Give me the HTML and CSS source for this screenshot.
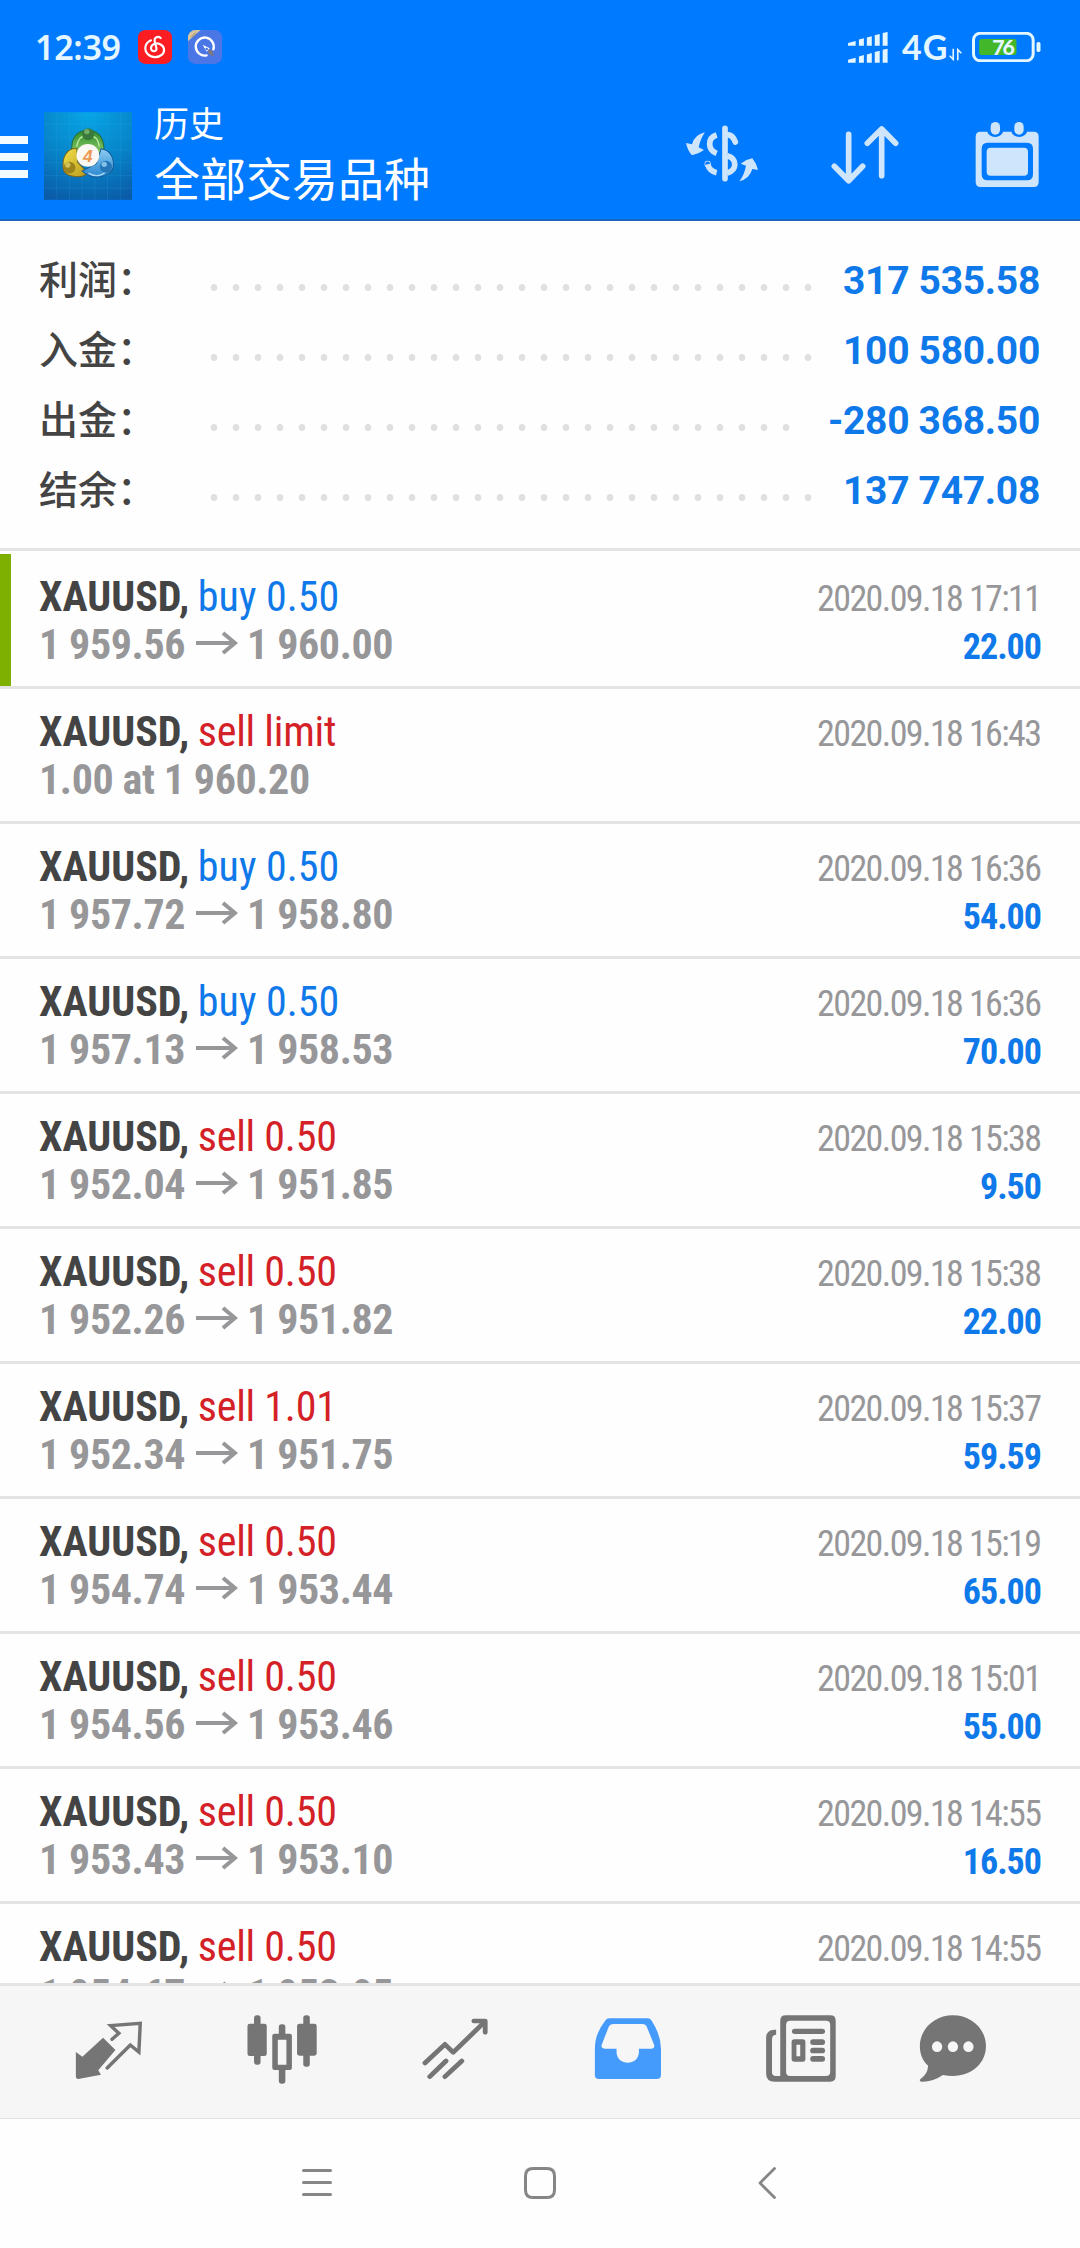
FILE: index.html
```html
<!DOCTYPE html>
<html lang="zh-CN">
<head>
<meta charset="utf-8">
<title>历史</title>
<link rel="stylesheet" href="styles.css">
</head>
<body>
<div class="screen">
  <header class="header">
    <div class="status">
      <span class="clock">12:39</span>
      <svg class="badge badge-music" viewBox="0 0 102 102"><rect width="102" height="102" rx="22" fill="#fb1d22"/><path d="M68 24C60 17 48 22 50 34L55 53C59 66 40 68 39 55C39 43 54 37 65 42C80 48 82 64 72 74C61 84 40 84 29 72C16 57 22 38 39 31" fill="none" stroke="#fff" stroke-width="6.5" stroke-linecap="round"/></svg>
      <svg class="badge" viewBox="0 0 102 102"><rect width="102" height="102" rx="22" fill="#4a76e6"/><path d="M0 34V22A22 22 0 0 1 22 0H38Z" fill="#d6c49d"/><path d="M10 22L22 8M15 23L26 10" stroke="#8c7a63" stroke-width="2"/><path d="M56 76A27 27 0 1 1 76 58" fill="none" stroke="#fff" stroke-width="7" stroke-linecap="round"/><path d="M44 44L65 55L56 65Z" fill="#fff"/><circle cx="56" cy="57" r="4" fill="#4a76e6"/><path d="M61 59C69 57 75 62 75 70L79 79L68 75C61 73 58 66 61 59Z" fill="#7c7785"/></svg>
      <span class="status-gap"></span>
      <svg class="signal" viewBox="627 96 121 94" fill="#e4f6ff"><path d="M627 129L650 123V138H627ZM660 119L675 115V138H660ZM684 113L699 109V138H684ZM708 106L723 102V138H708ZM732 99L747 96V138H732Z"/><path d="M627 180L650 174V189H627ZM660 170L675 166V189H660ZM684 164L699 160V189H684ZM708 157L723 153V189H708ZM732 150L747 147V189H732Z"/></svg>
      <span class="network">4G</span>
      <svg class="data" viewBox="930 143 40 38" fill="none" stroke="#e4f6ff" stroke-width="5"><path d="M943 144V177L932 166M957 180V147L968 158"/></svg>
      <svg class="battery" viewBox="998 96 206 90"><rect x="1002" y="100" width="179" height="82" rx="20" fill="none" stroke="#e4f6ff" stroke-width="9"/><rect x="1019" y="117" width="112" height="48" rx="7" fill="#43b72a"/><rect x="1191" y="126" width="12" height="30" rx="5" fill="#e4f6ff"/><text class="battery-text" x="1089" y="164" text-anchor="middle">76</text></svg>
    </div>
    <div class="toolbar">
      <div class="burger"><i></i><i></i><i></i></div>
      <svg class="logo" viewBox="133 335 263 262">
        <defs>
          <radialGradient id="sky" cx=".5" cy="0" r="1.05"><stop offset="0" stop-color="#07a6e6"/><stop offset=".55" stop-color="#0784c9"/><stop offset="1" stop-color="#0a5ca8"/></radialGradient>
          <linearGradient id="green" x1="0" y1="0" x2="0" y2="1"><stop offset="0" stop-color="#2f8c2c"/><stop offset="1" stop-color="#8fce6c"/></linearGradient>
          <linearGradient id="gold" x1="0" y1="0" x2="1" y2="1"><stop offset="0" stop-color="#f2e04a"/><stop offset="1" stop-color="#b99a1c"/></linearGradient>
          <linearGradient id="blue" x1="0" y1="0" x2="0" y2="1"><stop offset="0" stop-color="#8ccdf2"/><stop offset="1" stop-color="#2a86cf"/></linearGradient>
        </defs>
        <rect x="133" y="335" width="263" height="262" fill="url(#sky)"/>
        <path d="M171 335V597M209 335V597M247 335V597M285 335V597M323 335V597M361 335V597M133 372H396M133 410H396M133 448H396M133 486H396M133 524H396M133 562H396" stroke="#35b5e6" stroke-opacity=".25" stroke-width="2"/>
        <path d="M217 452C212 415 230 390 264 388C298 390 314 415 312 452L294 464L234 462Z" fill="url(#green)" stroke="#286b35" stroke-width="3"/>
        <path d="M231 438C234 415 243 404 264 404C286 404 296 415 298 438" fill="none" stroke="#b9e59d" stroke-width="4"/>
        <path d="M231 444C202 442 185 470 191 506C195 528 244 536 264 517L234 485Z" fill="url(#gold)" stroke="#77631a" stroke-width="3"/>
        <path d="M304 444C329 447 344 471 340 500C335 524 284 545 247 511L289 489Z" fill="url(#blue)" stroke="#165a96" stroke-width="3"/>
        <path d="M266 517C289 532 317 523 320 503" fill="none" stroke="#a9daf5" stroke-width="4"/>
        <circle cx="265" cy="401" r="18" fill="#39793b"/><circle cx="261" cy="393" r="8" fill="#71ae68"/>
        <circle cx="209" cy="501" r="18" fill="#9b831d"/><circle cx="204" cy="493" r="8" fill="#d2c156"/>
        <circle cx="318" cy="498" r="18" fill="#2476b7"/><circle cx="313" cy="491" r="8" fill="#82bfe8"/>
        <circle cx="264" cy="464" r="34" fill="#fbf8f3"/>
        <text class="logo-number" x="264" y="483" text-anchor="middle">4</text>
      </svg>
      <div class="titles"><div class="caption">历史</div><div class="title">全部交易品种</div></div>
      <svg class="tool" viewBox="138 362 217 201"><g fill="none" stroke="#cfe5fb" stroke-width="17"><path d="M255 384V535" stroke-linecap="round"/><path d="M230 404C202 413 202 448 230 459"/><path d="M262 403C276 404 282 413 286 425" stroke-linecap="round"/><path d="M262 466C292 475 292 509 262 518"/><path d="M203 492C207 507 216 514 230 517"/><circle cx="203" cy="491" r="1"/></g><path d="M195 396Q163 403 156 432L138 428Q142 449 156 465Q174 462 192 449L176 441Q181 416 195 396ZM298 543Q329 535 337 506L354 509Q350 490 337 474Q319 477 302 490L318 496Q313 524 298 543Z" fill="#cfe5fb"/></svg>
      <svg class="tool" viewBox="567 362 217 201" fill="none" stroke="#cfe5fb" stroke-width="17" stroke-linecap="round" stroke-linejoin="round"><path d="M626 402V540M583 498L626 541L668 498M725 526V386M682 429L725 386L767 429"/></svg>
      <svg class="tool" viewBox="995 362 217 201" fill="#cfe5fb"><path fill-rule="evenodd" d="M1024 394H1044C1049 414 1086 414 1091 394H1116C1121 414 1158 414 1163 394H1183Q1198 394 1198 409V545Q1198 560 1183 560H1024Q1009 560 1009 545V409Q1009 394 1024 394ZM1045 427Q1027 427 1027 445V522Q1027 540 1045 540H1163Q1181 540 1181 522V445Q1181 427 1163 427Z"/><rect x="1042" y="442" width="124" height="84" rx="12"/><rect x="1049" y="359" width="38" height="50" rx="19" fill="#007aff"/><rect x="1120" y="359" width="38" height="50" rx="19" fill="#007aff"/><rect x="1054" y="365" width="28" height="38" rx="14"/><rect x="1125" y="365" width="28" height="38" rx="14"/></svg>
    </div>
  </header>

  <main class="content">
    <section class="summary">
      <div class="sum-row"><span class="sum-label">利润：</span><span class="dots"></span><span class="sum-value">317 535.58</span></div>
      <div class="sum-row"><span class="sum-label">入金：</span><span class="dots"></span><span class="sum-value">100 580.00</span></div>
      <div class="sum-row"><span class="sum-label">出金：</span><span class="dots dots-short"></span><span class="sum-value">-280 368.50</span></div>
      <div class="sum-row"><span class="sum-label">结余：</span><span class="dots"></span><span class="sum-value">137 747.08</span></div>
    </section>
    <section class="deals" id="deals"></section>
  </main>

  <nav class="tabs">
    <svg class="tab" viewBox="202 400 226.5 225" preserveAspectRatio="none" fill="#757575"><path d="M298 474L334 511L284 572L292 585L226 598Q219 598 219 590V517L238 531Z"/><path d="M324 479L344 461L320 438L406 431L402 517L377 496L310 565" fill="none" stroke="#757575" stroke-width="10" stroke-linecap="round"/></svg>
    <svg class="tab" viewBox="703 400 226.5 225" preserveAspectRatio="none" fill="#757575"><rect x="716" y="432" width="56" height="97" rx="7"/><rect x="735" y="407" width="19" height="148" rx="8"/><rect x="860" y="432" width="57" height="96" rx="7"/><rect x="878" y="407" width="19" height="154" rx="8"/><rect x="807" y="434" width="19" height="35" rx="8"/><rect x="807" y="562" width="19" height="50" rx="8"/><path fill-rule="evenodd" d="M795 462H839Q845 462 845 468V565Q845 571 839 571H795Q788 571 788 565V468Q788 462 795 462ZM804 480V555H829V480Z"/></svg>
    <svg class="tab" viewBox="1205 400 226.5 225" preserveAspectRatio="none" fill="none" stroke="#757575" stroke-width="14" stroke-linecap="round" stroke-linejoin="round"><path d="M1231 550L1289 494L1313 518L1402 429M1245 591L1292 544M1289 591L1338 544M1373 424H1406V458"/></svg>
    <svg class="tab" viewBox="141 400 226.5 225" preserveAspectRatio="none"><path fill="#459bfb" fill-rule="evenodd" d="M201 416H311Q319 416 323 423Q350 466 350 507V585Q350 598 338 598H170Q158 598 158 585V507Q158 462 188 423Q192 416 201 416ZM212 433Q202 433 198 442L178 495Q175 506 186 507H221V518C223 560 284 560 286 518V507H323Q333 506 330 495L309 442Q306 433 296 433Z"/></svg>
    <svg class="tab" viewBox="644 400 226.5 225" preserveAspectRatio="none"><path fill="#757575" fill-rule="evenodd" d="M713 407H842Q858 407 858 423V590Q858 606 842 606H681Q656 606 656 582V475Q656 450 682 450H685V465Q673 465 673 479V578Q673 589 684 589H697V423Q697 407 713 407ZM726 423Q714 423 714 435V577Q714 589 726 589H830Q842 589 842 577V435Q842 423 830 423ZM738 479H763Q770 479 770 487V538Q770 546 763 546H738Q730 546 730 538V487Q730 479 738 479ZM744 495V530H755V495Z"/><g fill="#757575"><rect x="731" y="447" width="96" height="16" rx="8"/><rect x="784" y="479" width="43" height="17" rx="8"/><rect x="784" y="504" width="43" height="17" rx="8"/><rect x="784" y="529" width="43" height="17" rx="8"/></g></svg>
    <svg class="tab" viewBox="1086 400 226.5 225" preserveAspectRatio="none"><path fill="#757575" d="M1199 407C1252 407 1295 448 1295 499C1295 555 1245 601 1170 586Q1140 607 1109 606C1102 606 1101 601 1106 597Q1126 582 1127 558C1110 543 1103 522 1103 499C1103 448 1146 407 1199 407Z"/><g fill="#f6f6f6"><ellipse cx="1153" cy="501" rx="15" ry="16"/><ellipse cx="1199" cy="501" rx="15" ry="16"/><ellipse cx="1244" cy="501" rx="15" ry="16"/></g></svg>
  </nav>
  <footer class="sysnav">
    <svg width="30" height="32" viewBox="0 0 30 32" fill="none" stroke="#868686" stroke-width="3" stroke-linecap="round"><path d="M1.5 3.5H28.5M1.5 15.5H28.5M1.5 27.5H28.5"/></svg>
    <svg width="32" height="32" viewBox="0 0 32 32" fill="none" stroke="#868686" stroke-width="3"><path d="M9 1.5H23Q30.5 1.5 30.5 9V23Q30.5 30.5 23 30.5H9Q1.5 30.5 1.5 23V9Q1.5 1.5 9 1.5Z"/></svg>
    <svg width="18" height="32" viewBox="0 0 18 32" fill="none" stroke="#868686" stroke-width="2.8" stroke-linecap="round" stroke-linejoin="round"><path d="M16.5 1.5L2 16L16.5 30.5"/></svg>
  </footer>
</div>
<script src="deals.js"></script>
</body>
</html>
```
FILE: styles.css
```css
* { box-sizing: border-box; }
body { margin: 0; background: #fff; font-family: Roboto, "Noto Sans CJK SC", sans-serif; }
svg { display: block; flex: none; }
.screen { width: 1080px; height: 2248px; display: flex; flex-direction: column; overflow: hidden; background: #fefefe; }

.header { flex: none; height: 221px; background: #007aff; border-bottom: 2px solid #1767bd; }
.status { height: 95px; display: flex; align-items: flex-start; padding: 30px 39px 0 35px; color: #e4f6ff; }
.clock { width: 103px; font: 600 34px/34px "Noto Sans", sans-serif; letter-spacing: -.3px; white-space: nowrap; }
.badge { width: 34px; height: 34px; margin-right: 16px; }
.status-gap { flex: 1; }
.signal { width: 40px; height: 31px; margin-top: 2px; }
.network { width: 47px; margin-left: 14px; font: 700 34px/34px Lato, sans-serif; letter-spacing: 1px; }
.data { width: 13px; height: 13px; margin-top: 18px; }
.battery { width: 69px; height: 30px; margin: 2px 0 0 10px; }
.battery-text { font: 900 64px Lato, sans-serif; fill: #e4f6ff; letter-spacing: -6px; }

.toolbar { height: 124px; display: flex; align-items: flex-start; }
.burger { display: flex; flex-direction: column; gap: 9px; width: 28px; margin: 41px 16px 0 0; }
.burger i { height: 8px; background: #f2fbff; }
.logo { width: 88px; height: 88px; margin-top: 17px; }
.logo-number { font: italic 700 52px "Liberation Sans", sans-serif; fill: #eb9a55; }
.titles { flex: 1; margin-left: 22px; color: #fff; font-family: "Noto Sans CJK SC", sans-serif; white-space: nowrap; }
.caption { margin-top: 6px; font-size: 35px; line-height: 42px; }
.title { margin-top: 5px; font-size: 46px; line-height: 56px; }
.tool { width: 72.33px; height: 67px; margin-top: 25.67px; }
.tool + .tool { margin-left: 70.5px; }
.tool:last-child { margin-right: 36.2px; }

.content { flex: none; height: 1762px; overflow: hidden; }
.summary { height: 330px; padding: 24px 40px 0 39px; border-bottom: 3px solid #e4e4e4; }
.sum-row { height: 70px; display: flex; align-items: center; }
.sum-label { width: 163.5px; padding-bottom: 7px; color: #444; font: 500 39px/56px "Noto Sans CJK SC", sans-serif; }
.dots { width: 616px; height: 7px; margin-top: 15px; background: radial-gradient(circle, #e0e0e0 3.1px, transparent 3.7px) 0 0 / 22px 7px repeat-x; }
.dots-short { width: 594px; }
.sum-value { margin-left: auto; padding-top: 2px; color: #0f79ea; font: 700 39px/56px Roboto, sans-serif; letter-spacing: -.3px; white-space: nowrap; }

.deal { height: 135px; display: flex; justify-content: space-between; padding: 18px 38px 0 39px; border-bottom: 3px solid #e4e4e4; font-family: "Roboto Condensed", Roboto, sans-serif; font-stretch: 75%; white-space: nowrap; }
.deal-open { box-shadow: inset 11px 0 #7db000; }
.deals { padding-top: 3px; }
.line { display: flex; align-items: center; height: 48px; font-size: 42px; }
.symbol { color: #444; font-weight: 700; }
.buy { color: #0f79ea; }
.sell { color: #d42127; letter-spacing: -.25px; }
.op { margin-left: 8.5px; }
.prices { color: #97979a; font-weight: 700; letter-spacing: -.4px; }
.arrow { width: 43px; height: 24px; margin: 0 9px 3px 10px; }
.meta { text-align: right; }
.date, .profit { height: 48px; line-height: 54px; font-size: 36px; }
.date { margin-right: 1.6px; color: #97979a; letter-spacing: -1.6px; }
.profit { margin-right: 1px; color: #0f79ea; font-weight: 700; letter-spacing: -1px; }

.tabs { flex: none; height: 136px; display: grid; grid-template-columns: repeat(5, 173px) 132px; justify-items: center; padding: 27px 0 0 22px; background: #f6f6f6; border-top: 3px solid #e4e4e4; border-bottom: 1px solid #e0e0e0; }
.tab { width: 78px; height: 75px; }
.sysnav { flex: 1; display: flex; align-items: flex-start; padding: 48px 0 0 302px; }
.sysnav svg + svg { margin-left: 192px; }
.sysnav svg + svg + svg { margin-left: 202px; }
```
FILE: deals.js
```
const deals = [
  ["buy", "0.50", "1 959.56", "1 960.00", "17:11", "22.00"],
  ["sell", "limit", "1.00 at 1 960.20", "", "16:43", ""],
  ["buy", "0.50", "1 957.72", "1 958.80", "16:36", "54.00"],
  ["buy", "0.50", "1 957.13", "1 958.53", "16:36", "70.00"],
  ["sell", "0.50", "1 952.04", "1 951.85", "15:38", "9.50"],
  ["sell", "0.50", "1 952.26", "1 951.82", "15:38", "22.00"],
  ["sell", "1.01", "1 952.34", "1 951.75", "15:37", "59.59"],
  ["sell", "0.50", "1 954.74", "1 953.44", "15:19", "65.00"],
  ["sell", "0.50", "1 954.56", "1 953.46", "15:01", "55.00"],
  ["sell", "0.50", "1 953.43", "1 953.10", "14:55", "16.50"],
  ["sell", "0.50", "1 954.67", "1 953.05", "14:55", ""]
];
const arrow = '<svg class="arrow" viewBox="0 0 43 24" fill="none" stroke="#97979a" stroke-width="4"><path d="M1 12H40M28 2L40 12L28 22"/></svg>';
document.getElementById("deals").innerHTML = deals.map(([side, amount, from, to, time, profit], i) => `
  <article class="deal${i === 0 ? " deal-open" : ""}">
    <div>
      <div class="line"><span class="symbol">XAUUSD,</span><span class="op ${side}">${side} ${amount}</span></div>
      <div class="line prices"><span>${from}</span>${to ? arrow + `<span>${to}</span>` : ""}</div>
    </div>
    <div class="meta"><div class="date">2020.09.18 ${time}</div><div class="profit">${profit}</div></div>
  </article>`).join("");
```
